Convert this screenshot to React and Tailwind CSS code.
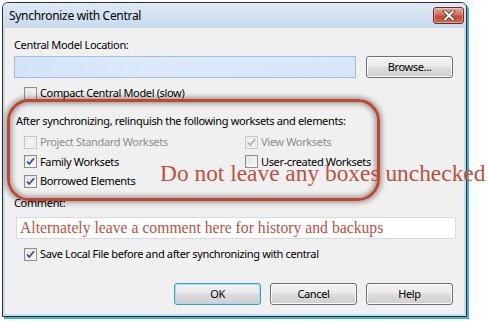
import React from "react";

function Check({ checked, disabled }) {
  return (
    <span
      className={
        "relative inline-flex items-center justify-center w-[13px] h-[13px] border shrink-0 " +
        (disabled
          ? "border-[#c5c5c5] bg-[#f4f4f4]"
          : "border-[#8e8f8f] bg-gradient-to-br from-[#dcdcdc] to-[#fbfbfb]")
      }
    >
      <span
        className={
          "absolute inset-[1px] border " +
          (disabled ? "border-[#e6e6e6]" : "border-[#f4f4f4]")
        }
      />
      {checked && (
        <svg width="11" height="11" viewBox="0 0 11 11" className="relative">
          <path
            d="M2 5.5 L4.3 8 L9 2.3"
            fill="none"
            stroke={disabled ? "#b3b3b3" : "#3c4e88"}
            strokeWidth="1.8"
          />
        </svg>
      )}
    </span>
  );
}

function CheckRow({ checked, disabled, label, className = "" }) {
  return (
    <div className={"flex items-center h-[16px] gap-[3px] " + className}>
      <Check checked={checked} disabled={disabled} />
      <span className={disabled ? "text-[#8d8d8d]" : "text-black"}>{label}</span>
    </div>
  );
}

function Btn({ children, focus }) {
  return (
    <div
      className={
        "w-[87px] h-[22px] rounded-[3px] border flex items-center justify-center bg-[linear-gradient(#f2f2f2,#ebebeb_45%,#dddddd_50%,#cfcfcf)] " +
        (focus
          ? "border-[#3c9ad8] shadow-[inset_0_0_0_1px_#a8daf5]"
          : "border-[#707070] shadow-[inset_0_0_0_1px_#fbfbfb]")
      }
    >
      {children}
    </div>
  );
}

export default function App() {
  return (
    <div className="relative w-[488px] h-[321px] bg-white overflow-hidden font-['Noto_Sans',sans-serif] text-[11px] tracking-[-0.35px] leading-[16px] text-black">
      <div className="ml-[2px] mt-[2px] w-[465px] h-[315px] border border-[#2d2d2d] rounded-t-[6px] bg-[#c9dbef] shadow-[2px_2px_0_#3db6df] flex flex-col">
        {/* title bar */}
        <div className="h-[25px] shrink-0 flex items-center justify-between pl-[6px] pr-[2px] rounded-t-[5px] bg-[linear-gradient(#dde9f5,#c8daee)]">
          <span className="text-[12px] tracking-[-0.3px] text-black">Synchronize with Central</span>
          <div className="w-[31px] h-[17px] rounded-[3px] border border-[#6e2d22] bg-[linear-gradient(#e9a897,#d26e58_45%,#c24a32_55%,#cf6a4f)] flex items-center justify-center shadow-[inset_0_0_0_1px_rgba(255,255,255,0.35)]">
            <svg width="14" height="11" viewBox="0 0 14 11">
              <path d="M3 1.5 L11 9.5 M11 1.5 L3 9.5" stroke="#5a2a22" strokeWidth="3.6" strokeLinecap="square" />
              <path d="M3 1.5 L11 9.5 M11 1.5 L3 9.5" stroke="#ffffff" strokeWidth="2" strokeLinecap="square" />
            </svg>
          </div>
        </div>
        {/* client */}
        <div className="relative flex-1 mx-[2px] mb-[2px] bg-[#f0f0f0] pl-[9px] pr-[11px] pt-[9px] flex flex-col">
          <div className="h-[16px]">Central Model Location:</div>
          <div className="mt-[3px] flex justify-between">
            <div className="w-[342px] h-[22px] border border-[#9fc0e2] bg-[linear-gradient(90deg,#d3e4f7,#dbe9f8_40%,#d6e6f7)]" />
            <Btn>Browse...</Btn>
          </div>
          <CheckRow className="mt-[7px] ml-[10px]" label="Compact Central Model (slow)" />
          <div className="mt-[12px] ml-[2px] h-[16px]">
            After synchronizing, relinquish the following worksets and elements:
          </div>
          <div className="mt-[5px] ml-[10px] grid grid-cols-[221px_1fr] gap-y-[3.5px]">
            <CheckRow disabled label="Project Standard Worksets" />
            <CheckRow disabled checked label="View Worksets" />
            <CheckRow checked label="Family Worksets" />
            <CheckRow label="User-created Worksets" />
            <CheckRow checked label="Borrowed Elements" />
            <div />
          </div>
          <div className="mt-[6px] h-[16px]">Comment:</div>
          <div className="mt-[6px] ml-[2px] w-[440px] h-[22px] border border-[#dadada] bg-white flex items-center pl-[3px]">
            <span className="font-['Liberation_Serif',serif] text-[15.7px] tracking-normal text-[#c0503f]">
              Alternately leave a comment here for history and backups
            </span>
          </div>
          <CheckRow className="mt-[7px] ml-[10px]" checked label="Save Local File before and after synchronizing with central" />
          <div className="mt-[21px] flex justify-end gap-[9px]">
            <Btn focus>OK</Btn>
            <Btn>Cancel</Btn>
            <Btn>Help</Btn>
          </div>
          {/* annotation ring */}
          <div className="absolute left-[2px] top-[71px] w-[373px] h-[102px] rounded-[22px] border-[3px] border-[#c0462e] shadow-[0_0_5px_2px_rgba(0,0,0,0.35),inset_0_0_5px_2px_rgba(0,0,0,0.35)] pointer-events-none" />
        </div>
      </div>
      {/* annotation text */}
      <div className="absolute left-[160px] top-[158px] font-['Liberation_Serif',serif] text-[23.4px] tracking-normal leading-[30px] text-[#c0503f] whitespace-nowrap">
        Do not leave any boxes unchecked
      </div>
    </div>
  );
}
